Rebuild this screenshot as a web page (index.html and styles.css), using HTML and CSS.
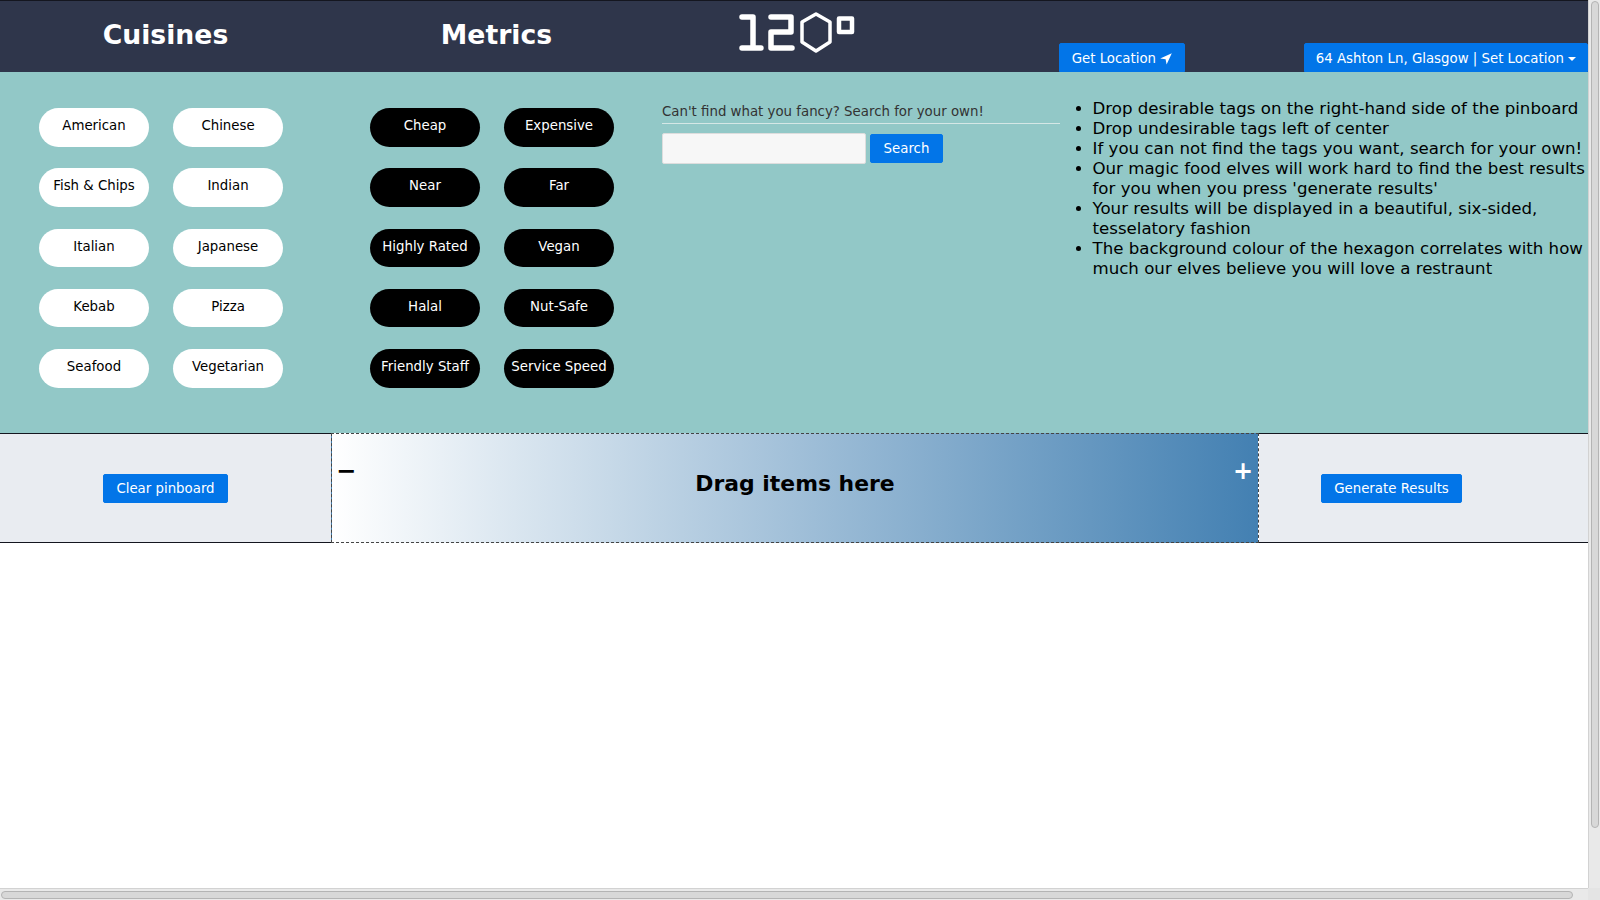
FILE: index.html
```html
<!DOCTYPE html>
<html lang="en">
<head>
<meta charset="utf-8">
<title>120°</title>
<link rel="stylesheet" href="styles.css">
</head>
<body>
<div class="page">
  <header class="topbar">
    <div class="top-col cuisines-col"><h2>Cuisines</h2></div>
    <div class="top-col metrics-col"><h2>Metrics</h2></div>
    <div class="logo-col">
      <svg class="logo" width="118" height="42" viewBox="0 0 118 42" fill="none" stroke="#fff" stroke-width="5.5" stroke-linejoin="round" stroke-linecap="round">
        <path d="M4 5H15V36M4 36H23"/>
        <path d="M33 5H53V20H33V36H54"/>
        <path stroke-width="3.5" d="M78 2L92 10V30L78 39L64 30V10Z"/>
        <path stroke-width="4.5" d="M101 6.5H114V20H101Z"/>
      </svg>
    </div>
    <button class="btn nav-btn get-btn">Get Location
      <svg class="arrow" width="12" height="12" viewBox="0 0 12 12"><path d="M11.8 .2L6.6 11.6L5.6 6.3L.2 5.4Z" fill="#fff"/></svg>
    </button>
    <button class="btn nav-btn set-btn">64 Ashton Ln, Glasgow | Set Location <span class="caret"></span></button>
  </header>

  <section class="panel">
    <div class="tags light">
      <span class="tag">American</span><span class="tag">Chinese</span>
      <span class="tag">Fish &amp; Chips</span><span class="tag">Indian</span>
      <span class="tag">Italian</span><span class="tag">Japanese</span>
      <span class="tag">Kebab</span><span class="tag">Pizza</span>
      <span class="tag">Seafood</span><span class="tag">Vegetarian</span>
    </div>
    <div class="tags dark">
      <span class="tag">Cheap</span><span class="tag">Expensive</span>
      <span class="tag">Near</span><span class="tag">Far</span>
      <span class="tag">Highly Rated</span><span class="tag">Vegan</span>
      <span class="tag">Halal</span><span class="tag">Nut-Safe</span>
      <span class="tag">Friendly Staff</span><span class="tag">Service Speed</span>
    </div>
    <div class="search">
      <p class="search-label">Can't find what you fancy? Search for your own!</p>
      <div class="search-row">
        <input class="search-input" type="text">
        <button class="btn">Search</button>
      </div>
    </div>
    <ul class="help">
      <li>Drop desirable tags on the right-hand side of the pinboard</li>
      <li>Drop undesirable tags left of center</li>
      <li>If you can not find the tags you want, search for your own!</li>
      <li>Our magic food elves will work hard to find the best results for you when you press 'generate results'</li>
      <li>Your results will be displayed in a beautiful, six-sided, tesselatory fashion</li>
      <li>The background colour of the hexagon correlates with how much our elves believe you will love a restraunt</li>
    </ul>
  </section>

  <section class="board">
    <div class="side left-side"><button class="btn">Clear pinboard</button></div>
    <div class="drop">
      <span class="sign minus">−</span>
      <h3>Drag items here</h3>
      <span class="sign plus">+</span>
    </div>
    <div class="side right-side"><button class="btn">Generate Results</button></div>
  </section>
</div>
<div class="sb-v"><div class="sb-v-thumb"></div></div>
<div class="sb-h"><div class="sb-h-thumb"></div></div>
<div class="sb-corner"></div>
</body>
</html>
```
FILE: styles.css
```css
* { box-sizing: border-box; }
html, body { margin: 0; height: 100%; overflow: hidden; background: #fff; }
body { font-family: "DejaVu Sans", sans-serif; font-size: 13.33px; color: #000; }
.page { width: 1588px; }

.topbar { height: 72px; background: #2f364b; border-top: 1px solid #14161f; display: flex; align-items: flex-start; color: #fff; }
.top-col { width: 331px; text-align: center; }
.top-col h2 { margin: 0; font-size: 26.67px; font-weight: 700; line-height: 34px; padding-top: 16.5px; }
.logo-col { width: 397px; padding: 11px 0 0 76px; flex: none; }
.logo { display: block; }
.btn { font-family: inherit; font-size: 13.33px; line-height: 20px; height: 29px; color: #fff; background: #0275e8; border: 1px solid #0275e8; border-radius: 2px; padding: 2px 12px 0; white-space: nowrap; }
.nav-btn { margin-top: 42px; border-radius: 2px 2px 0 0; }
.get-btn { width: 126px; padding: 2px 0 0; }
.set-btn { width: 284px; margin-left: 119px; padding: 2px 0 0; }
.arrow { vertical-align: -2px; }
.caret { display: inline-block; border: 4px solid transparent; border-top-color: #fff; border-bottom: 0; vertical-align: 2px; }

.panel { height: 361px; background: #92c8c7; display: flex; align-items: flex-start; }
.tags { display: grid; grid-template-columns: 110px 110px; column-gap: 24px; row-gap: 21.6px; flex: none; }
.tags.light { margin: 36.3px 0 0 39px; width: 331px; }
.tags.dark { margin: 36.3px 0 0 0; width: 292px; }
.tag { height: 38.6px; border-radius: 20px; display: block; text-align: center; line-height: 36.8px; font-size: 13.33px; white-space: nowrap; }
.light .tag { background: #fff; color: #000; }
.dark .tag { background: #000; color: #fff; }

.search { width: 398px; flex: none; padding-top: 29px; }
.search-label { margin: 0; font-size: 13.33px; line-height: 21px; color: #333; border-bottom: 1px solid #d5e7e6; padding-bottom: 1px; height: 23px; }
.search-row { display: flex; gap: 4px; margin-top: 9px; align-items: center; }
.search-input { width: 204px; height: 31px; background: #f7f7f7; border: 1px solid #ddd; border-radius: 2px; padding: 0; }
.search-row .btn { width: 73px; padding: 1px 0 0; }

.help { margin: 27px 0 0 0; padding: 0 0 0 32.5px; flex: 1; font-size: 16.64px; line-height: 20px; list-style: disc; }

.board { display: flex; height: 110px; border-top: 1px solid #14161f; border-bottom: 1px solid #14161f; }
.side { background: #e9ecf1; display: flex; align-items: center; justify-content: center; }
.left-side { width: 331px; }
.right-side { flex: 1; padding-right: 64px; }
.drop { width: 928px; margin: -1px 0; border: 1px dashed #444; background: linear-gradient(to right, #fff, #4380b2); position: relative; }
.drop h3 { margin: 0; width: 100%; text-align: center; font-size: 21.9px; font-weight: 700; line-height: 26px; padding-top: 37px; }
.sign { position: absolute; top: 23px; font-size: 24px; line-height: 28px; font-weight: 700; }
.minus { left: 4px; color: #000; }
.plus { right: 5px; color: #fff; }

.sb-v { position: fixed; top: 0; right: 0; width: 12px; height: 900px; background: #e9e9e9; border-left: 1px solid #d2d2d2; }
.sb-v-thumb { position: absolute; left: 2px; top: 1px; width: 8px; height: 827px; background: #d8d8d8; border: 1px solid #b4b4b4; border-radius: 4px; }
.sb-h { position: fixed; left: 0; bottom: 0; width: 1588px; height: 12px; background: #e9e9e9; border-top: 1px solid #d2d2d2; }
.sb-h-thumb { position: absolute; left: 1px; top: 2px; width: 1572px; height: 8px; background: #d8d8d8; border: 1px solid #b4b4b4; border-radius: 4px; }
.sb-corner { position: fixed; right: 0; bottom: 0; width: 12px; height: 12px; background: #e4e4e4; }
```
